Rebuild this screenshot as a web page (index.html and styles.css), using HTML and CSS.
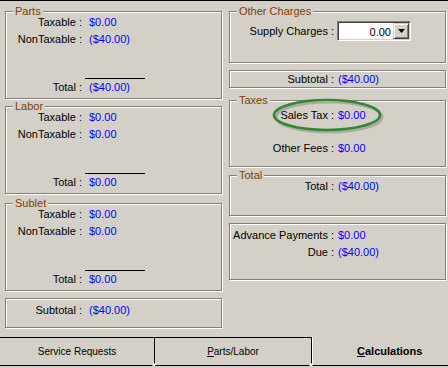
FILE: index.html
```html
<!DOCTYPE html>
<html>
<head>
<meta charset="utf-8">
<link rel="stylesheet" href="styles.css">
</head>
<body>
<div class="screen">
  <div class="topline"></div>
  <div class="panel">
    <div class="col left">
      <div class="box group">
        <div class="legend">Parts</div>
        <div class="row"><span class="lbl">Taxable :</span><span class="val">$0.00</span></div>
        <div class="row"><span class="lbl">NonTaxable :</span><span class="val">($40.00)</span></div>
        <div class="rule"></div>
        <div class="row"><span class="lbl">Total :</span><span class="val">($40.00)</span></div>
      </div>
      <div class="box group gap7">
        <div class="legend">Labor</div>
        <div class="row"><span class="lbl">Taxable :</span><span class="val">$0.00</span></div>
        <div class="row"><span class="lbl">NonTaxable :</span><span class="val">$0.00</span></div>
        <div class="rule"></div>
        <div class="row"><span class="lbl">Total :</span><span class="val">$0.00</span></div>
      </div>
      <div class="box group gap9">
        <div class="legend">Sublet</div>
        <div class="row"><span class="lbl">Taxable :</span><span class="val">$0.00</span></div>
        <div class="row"><span class="lbl">NonTaxable :</span><span class="val">$0.00</span></div>
        <div class="rule"></div>
        <div class="row"><span class="lbl">Total :</span><span class="val">$0.00</span></div>
      </div>
      <div class="box subtotal-left gap7">
        <div class="row"><span class="lbl">Subtotal :</span><span class="val">($40.00)</span></div>
      </div>
    </div>
    <div class="col right">
      <div class="box other">
        <div class="legend">Other Charges</div>
        <div class="row supply"><span class="lbl">Supply Charges :</span>
          <div class="combo">
            <span class="combo-text">0.00</span>
            <span class="combo-btn"><svg width="7" height="4" viewBox="0 0 7 4"><path d="M0 0H7L3.5 4Z" fill="#000"/></svg></span>
          </div>
        </div>
      </div>
      <div class="box subtotal-right gap7">
        <div class="row"><span class="lbl">Subtotal :</span><span class="val">($40.00)</span></div>
      </div>
      <div class="box taxes gap12">
        <div class="legend">Taxes</div>
        <svg class="ring" width="124" height="42" viewBox="0 0 124 42">
          <ellipse cx="62" cy="22" rx="53" ry="15" fill="none" stroke="rgba(0,0,0,0.18)" stroke-width="3"/>
          <ellipse cx="60" cy="20" rx="53" ry="15" fill="none" stroke="#2f8a2f" stroke-width="2.6"/>
        </svg>
        <div class="row sales"><span class="lbl">Sales Tax :</span><span class="val">$0.00</span></div>
        <div class="row fees"><span class="lbl">Other Fees :</span><span class="val">$0.00</span></div>
      </div>
      <div class="box total gap8">
        <div class="legend">Total</div>
        <div class="row"><span class="lbl">Total :</span><span class="val">($40.00)</span></div>
      </div>
      <div class="box advance gap7">
        <div class="row"><span class="lbl">Advance Payments :</span><span class="val">$0.00</span></div>
        <div class="row"><span class="lbl">Due :</span><span class="val">($40.00)</span></div>
      </div>
    </div>
  </div>
  <div class="tabs">
    <div class="tab t1">Service Requests</div>
    <div class="tab t2"><span><u>P</u>arts/Labor</span></div>
    <div class="tab t3"><span><u>C</u>alculations</span></div>
  </div>
</div>
</body>
</html>
```

FILE: styles.css
```css
* { box-sizing: border-box; }

body {
  margin: 0;
  background: #d4d0c8;
  font: 11px "Liberation Sans", Arial, sans-serif;
  color: #000;
}

.screen {
  width: 448px;
  height: 368px;
  display: flex;
  flex-direction: column;
  overflow: hidden;
  background: #d4d0c8;
}

.topline { height: 1px; background: #000; flex: none; }

.panel {
  flex: 1;
  display: flex;
  gap: 7px;
  padding: 10px 0 0 5px;
}

.col {
  width: 217px;
  display: flex;
  flex-direction: column;
}

.box {
  border: 1px solid #808080;
  box-shadow: inset 1px 1px 0 #fff, 1px 1px 0 #fff;
  flex: none;
}

.gap7 { margin-top: 7px; }
.gap8 { margin-top: 8px; }
.gap9 { margin-top: 9px; }
.gap12 { margin-top: 12px; }

.legend {
  width: max-content;
  margin: -7px 0 -4px 7px;
  padding: 0 2px;
  line-height: 13px;
  color: #804000;
  background: #d4d0c8;
  position: relative;
}

.row {
  display: flex;
  line-height: 17px;
  white-space: nowrap;
}

.lbl { text-align: right; flex: none; }
.val { color: #0000ff; }

.left .lbl { width: 76px; }
.left .val { margin-left: 7px; }

.right .lbl { width: 104px; }
.right .val { margin-left: 4px; }

.group { height: 88px; }

.rule {
  width: 60px;
  height: 1px;
  background: #000;
  margin: 30px 0 0 79px;
}

.subtotal-left { height: 30px; padding-top: 3px; }

/* right column */
.other { height: 52px; }

.supply {
  margin-top: 7px;
  align-items: center;
}

.combo {
  margin-left: 3px;
  width: 74px;
  height: 20px;
  display: flex;
  padding: 1px;
  background: #fff;
  border: 1px solid;
  border-color: #808080 #fff #fff #808080;
  box-shadow: inset 1px 1px 0 #404040, inset -1px -1px 0 #d4d0c8;
}

.combo-text {
  flex: 1;
  text-align: right;
  padding-right: 2px;
  line-height: 16px;
  padding-top: 1px;
}

.combo-btn {
  width: 16px;
  height: 16px;
  display: flex;
  align-items: center;
  justify-content: center;
  background: #d4d0c8;
  border: 1px solid;
  border-color: #d4d0c8 #404040 #404040 #d4d0c8;
  box-shadow: inset 1px 1px 0 #fff, inset -1px -1px 0 #808080;
}

.subtotal-right { height: 18px; }
.subtotal-right .row { line-height: 16px; }

.taxes { height: 67px; position: relative; }
.ring {
  position: absolute;
  left: 37px;
  top: -6px;
  pointer-events: none;
}
.sales { margin-top: 4px; }
.fees { margin-top: 16px; }

.total { height: 41px; }

.advance { height: 57px; padding-top: 3px; }

/* tabs */
.tabs {
  height: 31px;
  flex: none;
  display: flex;
  align-items: flex-start;
}

.tab {
  position: relative;
  height: 29px;
  border-top: 1px solid #000;
  border-bottom: 1px solid #000;
  display: flex;
  align-items: center;
  justify-content: center;
  font-size: 10px;
  white-space: nowrap;
}

.t1 { width: 155px; border-right: 1px solid #000; }
.t2 { width: 157px; border-right: 1px solid #000; }

.t1::after, .t2::after {
  content: "";
  position: absolute;
  right: -4px;
  bottom: -1px;
  width: 0;
  height: 0;
  border-left: 3px solid transparent;
  border-right: 3px solid transparent;
  border-bottom: 3px solid #fff;
}

.t3 {
  flex: 1;
  border-top: none;
  border-left: 1px solid #fff;
  justify-content: flex-start;
  padding-left: 44px;
  font-size: 11px;
  font-weight: bold;
}
```
